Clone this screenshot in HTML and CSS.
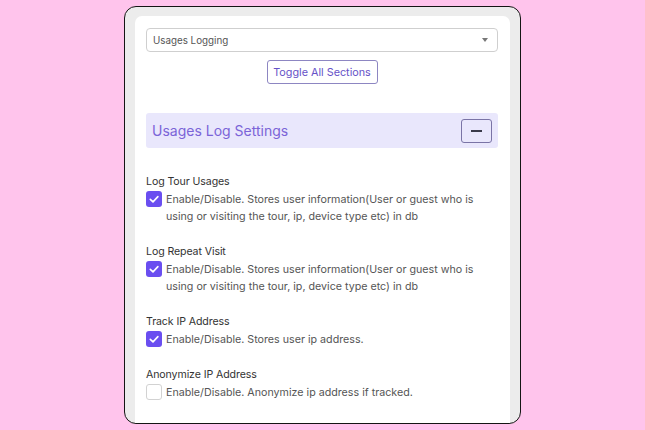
FILE: index.html
```html
<!DOCTYPE html>
<html>
<head>
<meta charset="utf-8">
<link rel="stylesheet" href="styles.css">
</head>
<body>
<div class="card">
  <div class="panel">
    <div class="select">
      <span class="select-text">Usages Logging</span>
      <span class="caret"></span>
    </div>
    <div class="toggle-row">
      <button class="toggle-btn">Toggle All Sections</button>
    </div>
    <div class="section-head">
      <span class="section-title">Usages Log Settings</span>
      <button class="collapse-btn"><span class="minus"></span></button>
    </div>
    <div class="field">
      <div class="label">Log Tour Usages</div>
      <div class="option">
        <span class="check on"><svg viewBox="0 0 16 16" width="16" height="16"><path d="M4.3 8.3 L7 10.9 L11.9 5.6" fill="none" stroke="#fff" stroke-width="1.6" stroke-linecap="round" stroke-linejoin="round"/></svg></span>
        <span class="desc">Enable/Disable. Stores user information(User or guest who is using or visiting the tour, ip, device type etc) in db</span>
      </div>
    </div>
    <div class="field">
      <div class="label">Log Repeat Visit</div>
      <div class="option">
        <span class="check on"><svg viewBox="0 0 16 16" width="16" height="16"><path d="M4.3 8.3 L7 10.9 L11.9 5.6" fill="none" stroke="#fff" stroke-width="1.6" stroke-linecap="round" stroke-linejoin="round"/></svg></span>
        <span class="desc">Enable/Disable. Stores user information(User or guest who is using or visiting the tour, ip, device type etc) in db</span>
      </div>
    </div>
    <div class="field">
      <div class="label">Track IP Address</div>
      <div class="option">
        <span class="check on"><svg viewBox="0 0 16 16" width="16" height="16"><path d="M4.3 8.3 L7 10.9 L11.9 5.6" fill="none" stroke="#fff" stroke-width="1.6" stroke-linecap="round" stroke-linejoin="round"/></svg></span>
        <span class="desc">Enable/Disable. Stores user ip address.</span>
      </div>
    </div>
    <div class="field">
      <div class="label">Anonymize IP Address</div>
      <div class="option">
        <span class="check"></span>
        <span class="desc">Enable/Disable. Anonymize ip address if tracked.</span>
      </div>
    </div>
  </div>
</div>
</body>
</html>
```

FILE: styles.css
```css
* { box-sizing: border-box; }
html, body { margin: 0; padding: 0; }
body {
  background: #ffc4ec;
  width: 645px;
  height: 430px;
  overflow: hidden;
  padding: 6px 0 0 124px;
  font-family: "Inter", "Liberation Sans", sans-serif;
}
.card {
  width: 397px;
  height: 418px;
  border: 1px solid #151515;
  border-radius: 12px;
  background: #ececec;
  padding: 9px 10px 0 10px;
  overflow: hidden;
}
.panel {
  background: #fff;
  border-radius: 7px 7px 0 0;
  height: 420px;
  padding: 12px 12px 0 11px;
}
.select {
  height: 24px;
  border: 1px solid #cfcfcf;
  border-radius: 4px;
  display: flex;
  align-items: center;
  justify-content: space-between;
  padding: 0 9px 0 6px;
}
.select-text {
  font-size: 9.8px;
  color: #555;
}
.caret {
  width: 0;
  height: 0;
  border-left: 3px solid transparent;
  border-right: 3px solid transparent;
  border-top: 4px solid #777;
}
.toggle-row {
  display: flex;
  justify-content: center;
  margin-top: 8px;
}
.toggle-btn {
  height: 24px;
  width: 111px;
  padding: 0;
  border: 1px solid #8d86c2;
  border-radius: 3px;
  background: #fff;
  color: #6652c8;
  font-family: inherit;
  font-size: 10.8px;
}
.section-head {
  margin-top: 29px;
  height: 35px;
  background: #e9e7fc;
  border-radius: 3px;
  display: flex;
  align-items: center;
  justify-content: space-between;
  padding: 0 6px 0 6px;
}
.section-title {
  font-size: 14px;
  color: #7b64d8;
}
.collapse-btn {
  width: 31px;
  height: 24px;
  border: 1px solid #7a74a6;
  border-radius: 3px;
  background: transparent;
  padding: 0;
  display: flex;
  align-items: center;
  justify-content: center;
}
.minus {
  width: 11px;
  height: 2px;
  background: #3a3a4a;
}
.field {
  margin-top: 18px;
}
.section-head + .field {
  margin-top: 25px;
}
.label {
  font-size: 10.6px;
  letter-spacing: -0.1px;
  line-height: 17px;
  color: #333;
}
.option {
  display: flex;
  align-items: flex-start;
  gap: 4px;
}
.check {
  flex: none;
  width: 16px;
  height: 16px;
  margin-top: 1px;
  border-radius: 3px;
  border: 1px solid #d2d2d2;
  background: #fff;
  display: flex;
}
.check.on {
  background: #6a4ef0;
  border: none;
}
.desc {
  font-size: 10.7px;
  line-height: 17px;
  padding-top: 1px;
  color: #555;
}
```
